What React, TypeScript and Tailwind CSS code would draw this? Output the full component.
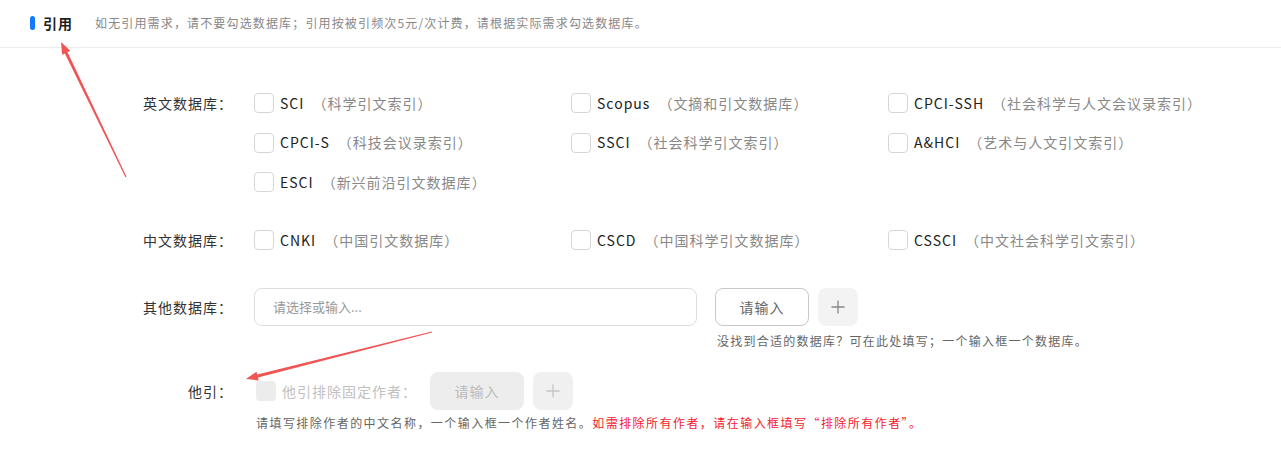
import React from "react";

const FONT = { fontFamily: '"Noto Sans CJK SC", "Noto Sans", sans-serif' };

function Arrow({ tail, tip }: { tail: [number, number]; tip: [number, number] }) {
  const dx = tip[0] - tail[0];
  const dy = tip[1] - tail[1];
  const len = Math.hypot(dx, dy);
  const ux = dx / len;
  const uy = dy / len;
  const nx = -uy;
  const ny = ux;
  const headLen = 12;
  const bx = tip[0] - ux * headLen;
  const by = tip[1] - uy * headLen;
  const pts: [number, number][] = [
    [tail[0] + nx * 0.6, tail[1] + ny * 0.6],
    [bx + nx * 1.5, by + ny * 1.5],
    [bx + nx * 4.5, by + ny * 4.5],
    [tip[0], tip[1]],
    [bx - nx * 4.5, by - ny * 4.5],
    [bx - nx * 1.5, by - ny * 1.5],
    [tail[0] - nx * 0.6, tail[1] - ny * 0.6],
  ];
  return <polygon points={pts.map((p) => p.join(",")).join(" ")} fill="#f05454" />;
}

function Checkbox({ disabled }: { disabled?: boolean }) {
  return disabled ? (
    <span className="inline-block w-[20px] h-[20px] rounded-[4px] bg-[#ececec] shrink-0" />
  ) : (
    <span className="inline-block w-[20px] h-[20px] rounded-[4px] border border-[#d6d6d6] bg-white shrink-0" />
  );
}

function Option({ name, desc }: { name: string; desc: string }) {
  return (
    <div className="flex items-center h-[20px] text-[14px] tracking-[1px] whitespace-nowrap">
      <Checkbox />
      <span className="ml-[6px] text-[#222]">{name}</span>
      <span className="ml-[8px] text-[#888]">（{desc}）</span>
    </div>
  );
}

function Label({ children }: { children: React.ReactNode }) {
  return (
    <div className="w-[113px] shrink-0 text-right text-[14px] tracking-[1px] text-[#333] leading-[20px] whitespace-nowrap">
      {children}
    </div>
  );
}

export default function App() {
  const english = [
    ["SCI", "科学引文索引"],
    ["Scopus", "文摘和引文数据库"],
    ["CPCI-SSH", "社会科学与人文会议录索引"],
    ["CPCI-S", "科技会议录索引"],
    ["SSCI", "社会科学引文索引"],
    ["A&HCI", "艺术与人文引文索引"],
    ["ESCI", "新兴前沿引文数据库"],
  ];
  const chinese = [
    ["CNKI", "中国引文数据库"],
    ["CSCD", "中国科学引文数据库"],
    ["CSSCI", "中文社会科学引文索引"],
  ];
  return (
    <div className="relative w-[1281px] h-[450px] bg-white overflow-hidden" style={FONT}>
      <div className="h-[48px] border-b border-[#ececec] flex items-center pl-[30px] pb-[1px]">
        <span className="w-[5px] h-[14px] rounded-full bg-[#1677ff]" />
        <span className="ml-[8px] text-[14px] tracking-[1px] font-bold text-[#1f1f1f]">引用</span>
        <span className="ml-[22px] text-[12px] tracking-[1.15px] text-[#888]">
          如无引用需求，请不要勾选数据库；引用按被引频次5元/次计费，请根据实际需求勾选数据库。
        </span>
      </div>

      <div className="pl-[120px]">
        <div className="flex mt-[45px]">
          <Label>英文数据库：</Label>
          <div className="ml-[21px] grid grid-cols-[317px_317px_317px] gap-y-[19.5px]">
            {english.map(([n, d]) => (
              <Option key={n} name={n} desc={d} />
            ))}
          </div>
        </div>

        <div className="flex mt-[38px]">
          <Label>中文数据库：</Label>
          <div className="ml-[21px] grid grid-cols-[317px_317px_317px]">
            {chinese.map(([n, d]) => (
              <Option key={n} name={n} desc={d} />
            ))}
          </div>
        </div>

        <div className="flex mt-[38px]">
          <div className="h-[38px] flex items-center">
            <Label>其他数据库：</Label>
          </div>
          <div className="ml-[21px] w-[443px] h-[38px] rounded-[8px] border border-[#dcdde3] flex items-center pl-[18px] text-[13px] text-[#999]">
            请选择或输入...
          </div>
          <div className="ml-[18px] flex flex-col">
            <div className="flex">
              <div className="w-[94px] h-[38px] rounded-[8px] border border-[#c8c8c8] flex items-center justify-center text-[14px] tracking-[1px] text-[#666]">
                请输入
              </div>
              <div className="ml-[9px] w-[40px] h-[38px] rounded-[8px] bg-[#f3f3f3] flex items-center justify-center">
                <svg width="14" height="14" viewBox="0 0 14 14">
                  <path d="M7 0.5V13.5M0.5 7H13.5" stroke="#888" strokeWidth="1.3" />
                </svg>
              </div>
            </div>
            <div className="mt-[6px] ml-[2px] text-[12px] tracking-[1.25px] leading-[18px] text-[#666] whitespace-nowrap">
              没找到合适的数据库？可在此处填写；一个输入框一个数据库。
            </div>
          </div>
        </div>

        <div className="flex mt-[22px]">
          <div className="h-[38px] flex items-center">
            <Label>他引：</Label>
          </div>
          <div className="ml-[23px] flex flex-col">
            <div className="flex items-center">
              <Checkbox disabled />
              <span className="ml-[6px] text-[14px] tracking-[1px] text-[#c0c0c0] w-[148px] whitespace-nowrap">他引排除固定作者：</span>
              <div className="w-[94px] h-[38px] rounded-[8px] bg-[#ededed] flex items-center justify-center text-[14px] tracking-[1px] text-[#bbb]">
                请输入
              </div>
              <div className="ml-[9px] w-[40px] h-[38px] rounded-[8px] bg-[#f0f0f0] flex items-center justify-center">
                <svg width="14" height="14" viewBox="0 0 14 14">
                  <path d="M7 0.5V13.5M0.5 7H13.5" stroke="#c4c4c4" strokeWidth="1.3" />
                </svg>
              </div>
            </div>
            <div className="mt-[4px] text-[12px] tracking-[1.45px] leading-[18px] whitespace-nowrap">
              <span className="text-[#666]">请填写排除作者的中文名称，一个输入框一个作者姓名。</span>
              <span className="text-[#f5222d]">如需排除所有作者，请在输入框填写“排除所有作者”。</span>
            </div>
          </div>
        </div>
      </div>

      <svg className="absolute left-0 top-0 pointer-events-none" width="1281" height="450">
        <Arrow tail={[126, 177]} tip={[61, 42]} />
        <Arrow tail={[432, 332]} tip={[246, 379]} />
      </svg>
    </div>
  );
}
